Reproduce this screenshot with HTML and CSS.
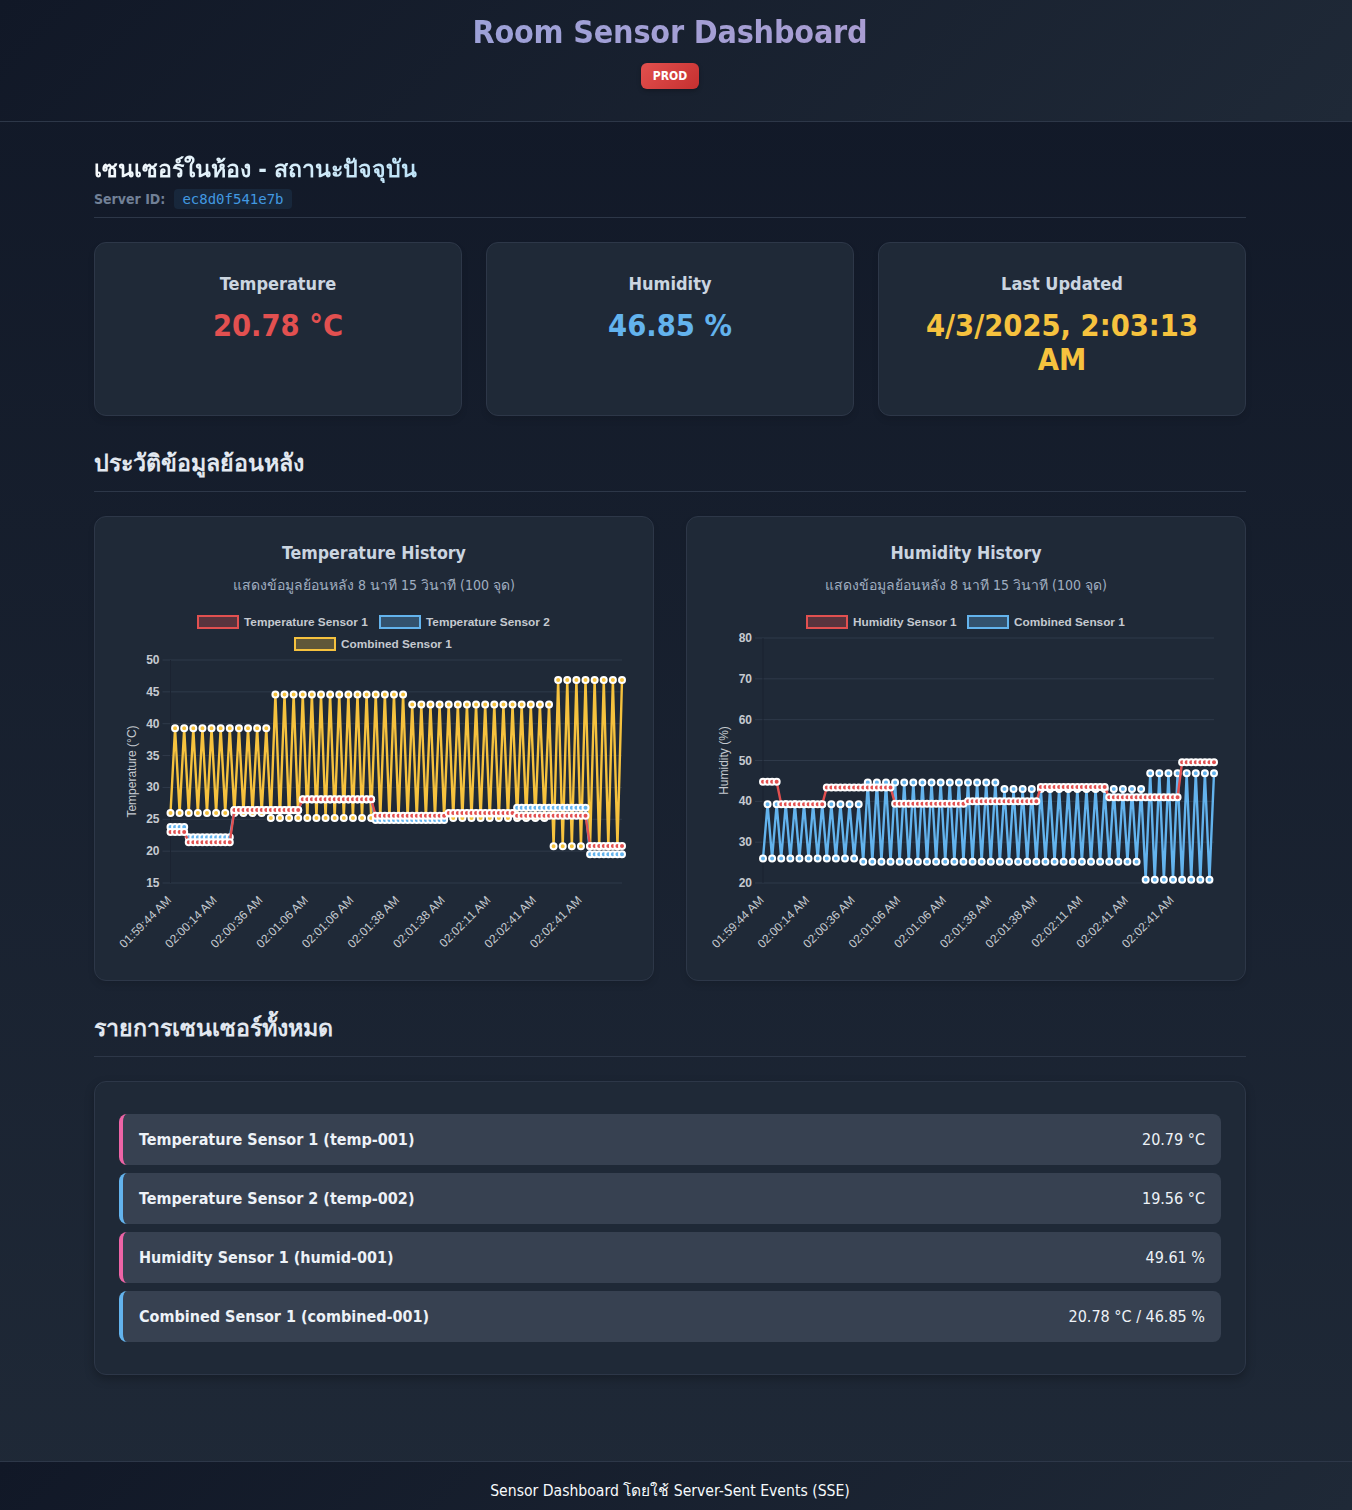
FILE: index.html
```html
<!DOCTYPE html>
<html lang="th">
<head>
  <meta charset="UTF-8">
  <meta name="viewport" content="width=device-width, initial-scale=1.0">
  <title>Room Sensor Dashboard</title>
  <link rel="stylesheet" href="styles.css">
</head>
<body>
  <!-- header -->
  <header class="top">
    <h1>Room Sensor Dashboard</h1>
    <span class="env_badge">PROD</span>
  </header>

  <main class="page">
    <!-- current status -->
    <section class="section_head head_status">
      <h2 class="status_title">เซนเซอร์ในห้อง - สถานะปัจจุบัน</h2>
      <div class="server_row">
        <span class="server_label">Server ID:</span>
        <code class="server_id">ec8d0f541e7b</code>
      </div>
    </section>
    <div class="cards">
      <div class="card">
        <h3>Temperature</h3>
        <div class="card_value temp">20.78 °C</div>
      </div>
      <div class="card">
        <h3>Humidity</h3>
        <div class="card_value humid">46.85 %</div>
      </div>
      <div class="card">
        <h3>Last Updated</h3>
        <div class="card_value time">4/3/2025, 2:03:13 AM</div>
      </div>
    </div>

    <!-- history -->
    <section class="section_head">
      <h2>ประวัติข้อมูลย้อนหลัง</h2>
    </section>
    <div class="charts">
      <div class="chart_card">
        <h3>Temperature History</h3>
        <p class="chart_note">แสดงข้อมูลย้อนหลัง 8 นาที 15 วินาที (100 จุด)</p>
        <svg id="temp_chart" class="chart" width="512" height="352"></svg>
      </div>
      <div class="chart_card">
        <h3>Humidity History</h3>
        <p class="chart_note">แสดงข้อมูลย้อนหลัง 8 นาที 15 วินาที (100 จุด)</p>
        <svg id="humid_chart" class="chart" width="512" height="352"></svg>
      </div>
    </div>

    <!-- sensor list -->
    <section class="section_head">
      <h2>รายการเซนเซอร์ทั้งหมด</h2>
    </section>
    <div class="sensor_panel">
      <div class="sensor_item pink">
        <span class="sensor_name">Temperature Sensor 1 (temp-001)</span>
        <span class="sensor_value">20.79 °C</span>
      </div>
      <div class="sensor_item blue">
        <span class="sensor_name">Temperature Sensor 2 (temp-002)</span>
        <span class="sensor_value">19.56 °C</span>
      </div>
      <div class="sensor_item pink">
        <span class="sensor_name">Humidity Sensor 1 (humid-001)</span>
        <span class="sensor_value">49.61 %</span>
      </div>
      <div class="sensor_item blue">
        <span class="sensor_name">Combined Sensor 1 (combined-001)</span>
        <span class="sensor_value">20.78 °C / 46.85 %</span>
      </div>
    </div>
  </main>

  <footer class="bottom">Sensor Dashboard โดยใช้ Server-Sent Events (SSE)</footer>

  <script src="charts.js"></script>
</body>
</html>
```
FILE: styles.css
```css
/* dashboard */
* {
  box-sizing: border-box;
}
body {
  margin: 0;
  min-height: 1510px;
  display: flex;
  flex-direction: column;
  background: linear-gradient(180deg, #111827, #1f2937);
  color: #e2e8f0;
  font-family: "DejaVu Sans", "Noto Sans", sans-serif;
  font-stretch: condensed;
}
h1, h2, h3, p {
  margin: 0;
}
.top {
  height: 122px;
  padding: 13px 12px 0 0;
  text-align: center;
  background: linear-gradient(135deg, #111827, #1f2937);
  border-bottom: 1px solid #2d3748;
}
.top h1 {
  font-size: 32px;
  line-height: 38px;
  letter-spacing: -0.2px;
  background: linear-gradient(90deg, #8ea6de, #b898cc);
  -webkit-background-clip: text;
  background-clip: text;
  color: transparent;
}
.env_badge {
  display: inline-block;
  margin-top: 12px;
  width: 58px;
  height: 26px;
  line-height: 26px;
  border-radius: 6px;
  background: linear-gradient(135deg, #e2504e, #c53030);
  box-shadow: 0 2px 4px rgba(0, 0, 0, 0.25);
  color: #fff;
  font-size: 12px;
  font-weight: bold;
}
.page {
  flex: 1;
  padding: 32px 106px 0 94px;
}
.section_head {
  padding-bottom: 14px;
  margin-bottom: 24px;
  border-bottom: 1px solid #2d3748;
}
.section_head h2 {
  font-size: 23.2px;
  line-height: 29px;
  font-weight: bold;
  color: #e2e8f0;
}
.head_status {
  padding-bottom: 8px;
}
.status_title {
  background: linear-gradient(90deg, #f7fafc, #bee3f8);
  -webkit-background-clip: text;
  background-clip: text;
  color: transparent !important;
  width: fit-content;
}
.server_row {
  display: flex;
  align-items: center;
  gap: 8px;
  margin-top: 6px;
  height: 20px;
}
.server_label {
  color: #718096;
  font-size: 14px;
  font-weight: bold;
}
.server_id {
  margin-left: 1px;
  padding: 0 8px 0 8px;
  height: 20px;
  line-height: 20px;
  border-radius: 4px;
  background: rgba(66, 153, 225, 0.1);
  color: #4299e1;
  font-family: "DejaVu Sans Mono", "Liberation Mono", monospace;
  font-size: 14px;
}
.cards {
  display: grid;
  grid-template-columns: repeat(3, 368px);
  gap: 24px;
  margin-bottom: 32px;
}
.card {
  height: 174px;
  padding: 28px 24px;
  text-align: center;
  background: #1f2937;
  border: 1px solid #2d3748;
  border-radius: 12px;
  box-shadow: 0 4px 6px rgba(0, 0, 0, 0.1);
}
.card h3 {
  font-size: 18px;
  line-height: 26px;
  color: #cbd5e0;
}
.card_value {
  margin-top: 12px;
  font-size: 30.5px;
  line-height: 34px;
  font-weight: bold;
}
.temp {
  color: #e25050;
}
.humid {
  color: #63b3ed;
}
.time {
  color: #f6c23e;
}
.charts {
  display: grid;
  grid-template-columns: 560px 560px;
  gap: 32px;
  margin-bottom: 32px;
}
.chart_card {
  height: 465px;
  padding: 24px 23px;
  text-align: center;
  background: #1f2937;
  border: 1px solid #2d3748;
  border-radius: 12px;
  box-shadow: 0 4px 6px rgba(0, 0, 0, 0.1);
}
.chart_card h3 {
  font-size: 17.6px;
  line-height: 24px;
  color: #cbd5e0;
}
.chart_note {
  margin-top: 8px;
  font-size: 14px;
  line-height: 24px;
  color: #a0aec0;
}
.chart {
  display: block;
  margin-top: 8px;
}
.chart text {
  font-family: "Liberation Sans", Arial, sans-serif;
  font-stretch: normal;
  fill: #c5c9d0;
}
.chart .legend_text {
  font-size: 11.8px;
  font-weight: bold;
}
.chart .tick_text {
  font-size: 12px;
  font-weight: bold;
}
.chart .x_text,
.chart .axis_title {
  font-size: 12px;
}
.sensor_panel {
  height: 294px;
  padding: 32px 24px;
  display: flex;
  flex-direction: column;
  gap: 8px;
  background: #1f2937;
  border: 1px solid #2d3748;
  border-radius: 12px;
  box-shadow: 0 4px 10px rgba(0, 0, 0, 0.25);
}
.sensor_item {
  height: 51px;
  padding: 0 16px;
  display: flex;
  justify-content: space-between;
  align-items: center;
  background: #374151;
  border-left: 4px solid;
  border-radius: 8px;
  font-size: 16px;
}
.pink {
  border-left-color: #ed64a6;
}
.blue {
  border-left-color: #63b3ed;
}
.sensor_name {
  font-weight: bold;
  color: #edf2f7;
}
.sensor_value {
  color: #edf2f7;
}
.bottom {
  height: 49px;
  padding: 19px 12px 0 0;
  text-align: center;
  font-size: 15.6px;
  line-height: 20px;
  color: #f7fafc;
  background: linear-gradient(135deg, #111827, #1f2937);
  border-top: 1px solid #2d3748;
}
```
FILE: charts.js
```js
// static copy of the last 100 readings
var NS = "http://www.w3.org/2000/svg";
var RED = "#e25050";
var BLUE = "#63b3ed";
var YELLOW = "#f6c23e";

// [value, how many points]
function expand(runs) {
  var out = [];
  runs.forEach(function (r) {
    for (var i = 0; i < r[1]; i++) out.push(r[0]);
  });
  return out;
}

// combined sensor sends temperature and humidity one after the other
var lows = expand([[26, 11], [25.2, 31], [20.78, 8]]);
var highs = expand([[39.3, 11], [44.6, 15], [43, 16], [46.85, 8]]);
var combined = [];
for (var i = 0; i < 50; i++) {
  combined.push(lows[i], highs[i]);
}

var temp1 = expand([[23, 4], [21.4, 10], [26.45, 15], [28.15, 16], [25.55, 16], [26, 15], [25.55, 16], [20.8, 8]]);
var temp2 = expand([[23.8, 4], [22.2, 10], [26.4, 15], [28.1, 16], [24.9, 16], [25.9, 15], [26.8, 16], [19.5, 8]]);
var humid1 = expand([[44.8, 4], [39.3, 10], [43.4, 15], [39.4, 16], [40, 16], [43.5, 15], [41, 16], [49.6, 8]]);

var labels = ["01:59:44 AM", "02:00:14 AM", "02:00:36 AM", "02:01:06 AM", "02:01:06 AM",
  "02:01:38 AM", "02:01:38 AM", "02:02:11 AM", "02:02:41 AM", "02:02:41 AM"];

function add(svg, tag, attrs, text) {
  var el = document.createElementNS(NS, tag);
  for (var k in attrs) el.setAttribute(k, attrs[k]);
  if (text !== undefined) el.textContent = text;
  svg.appendChild(el);
  return el;
}

function drawChart(svg, c) {
  var xOf = function (i) { return c.left + (c.right - c.left) * i / 99; };
  var yOf = function (v) { return c.bottom - (v - c.min) * (c.bottom - c.top) / (c.max - c.min); };

  // grid
  for (var v = c.min; v <= c.max; v += c.step) {
    add(svg, "line", { x1: c.left - 8, x2: c.right, y1: yOf(v), y2: yOf(v), stroke: "#2f3a4a" });
    add(svg, "text", { class: "tick_text", x: c.left - 11, y: yOf(v) + 4, "text-anchor": "end" }, v);
  }
  add(svg, "line", { x1: c.left, x2: c.left, y1: c.top, y2: c.bottom, stroke: "#1b2331" });

  // axis titles
  var midY = (c.top + c.bottom) / 2;
  add(svg, "text", {
    class: "axis_title", "text-anchor": "middle",
    transform: "translate(" + (c.left - 35) + " " + midY + ") rotate(-90)"
  }, c.title);
  labels.forEach(function (t, i) {
    var x = xOf(i * 10) + 1.5;
    add(svg, "text", {
      class: "x_text", "text-anchor": "end",
      transform: "translate(" + x + " " + (c.bottom + 18) + ") rotate(-45)"
    }, t);
  });

  // legend
  c.legend.forEach(function (l) {
    add(svg, "rect", { x: l.x, y: l.y - 6, width: 40, height: 12, fill: l.color, "fill-opacity": 0.3, stroke: l.color, "stroke-width": 2 });
    add(svg, "text", { class: "legend_text", x: l.x + 46, y: l.y + 4 }, l.text);
  });

  // first dataset ends up on top
  c.series.slice().reverse().forEach(function (s) {
    var pts = s.data.map(function (v, i) { return xOf(i) + "," + yOf(v); }).join(" ");
    add(svg, "polyline", { points: pts, fill: "none", stroke: s.color, "stroke-width": 2.4 });
    s.data.forEach(function (v, i) {
      add(svg, "circle", { cx: xOf(i), cy: yOf(v), r: 3, fill: s.color, stroke: "#fff", "stroke-width": 2 });
    });
  });
}

// svg sits 118px from the page edge (card 1) and 605px from the top
drawChart(document.getElementById("temp_chart"), {
  left: 52.5, right: 504, top: 55, bottom: 278,
  min: 15, max: 50, step: 5, title: "Temperature (°C)",
  legend: [
    { x: 80, y: 17, color: RED, text: "Temperature Sensor 1" },
    { x: 262, y: 17, color: BLUE, text: "Temperature Sensor 2" },
    { x: 177, y: 39, color: YELLOW, text: "Combined Sensor 1" }
  ],
  series: [
    { data: temp1, color: RED },
    { data: temp2, color: BLUE },
    { data: combined, color: YELLOW }
  ]
});

drawChart(document.getElementById("humid_chart"), {
  left: 53, right: 504, top: 33, bottom: 278,
  min: 20, max: 80, step: 10, title: "Humidity (%)",
  legend: [
    { x: 97, y: 17, color: RED, text: "Humidity Sensor 1" },
    { x: 258, y: 17, color: BLUE, text: "Combined Sensor 1" }
  ],
  series: [
    { data: humid1, color: RED },
    { data: combined, color: BLUE }
  ]
});
```
